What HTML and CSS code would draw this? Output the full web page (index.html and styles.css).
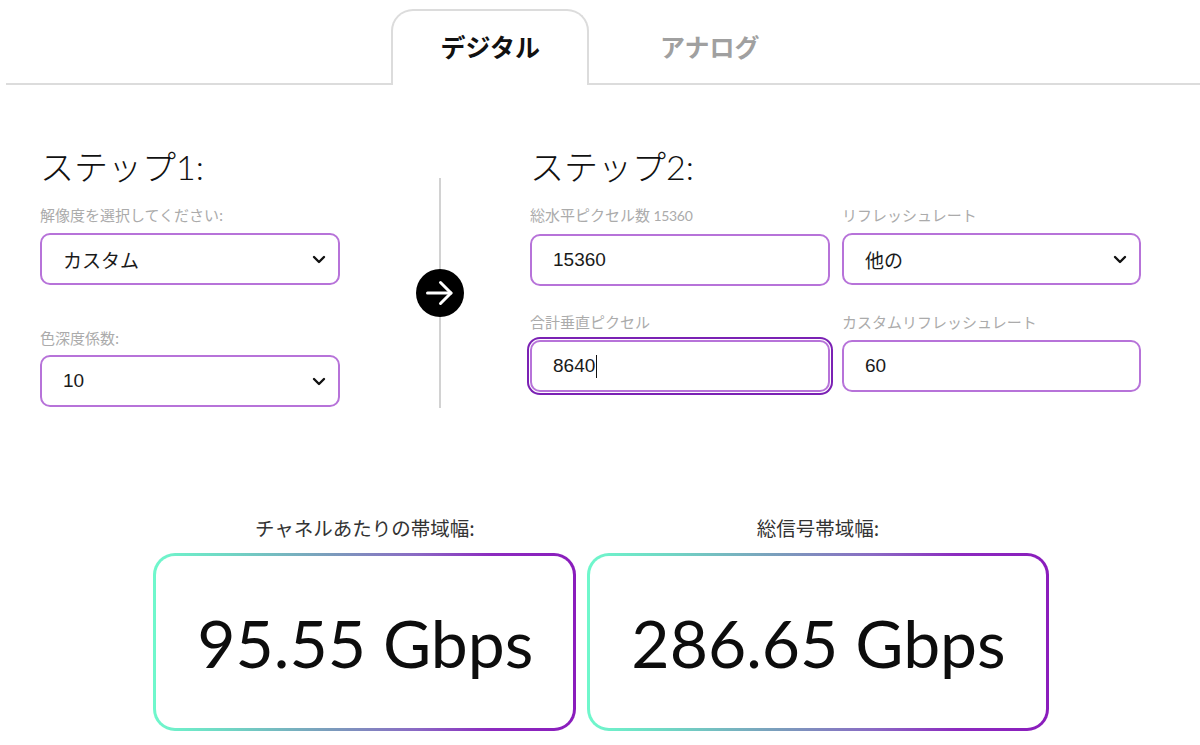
FILE: index.html
```html
<!DOCTYPE html>
<html lang="ja">
<head>
<meta charset="utf-8">
<title>帯域幅計算</title>
<link rel="stylesheet" href="styles.css">
</head>
<body>
<div class="tabbar">
  <div class="tab active">デジタル</div>
  <div class="tab">アナログ</div>
</div>

<div class="steps">
  <section class="step step1">
    <h2 class="step-title">ステップ1:</h2>
    <div class="label">解像度を選択してください:</div>
    <div class="field select"><span>カスタム</span><svg class="chev" width="14" height="9" viewBox="0 0 14 9"><polyline points="2,2 7,7 12,2" fill="none" stroke="#111" stroke-width="2.4" stroke-linecap="round" stroke-linejoin="round"/></svg></div>
    <div class="label label-gap">色深度係数:</div>
    <div class="field select"><span>10</span><svg class="chev" width="14" height="9" viewBox="0 0 14 9"><polyline points="2,2 7,7 12,2" fill="none" stroke="#111" stroke-width="2.4" stroke-linecap="round" stroke-linejoin="round"/></svg></div>
  </section>

  <div class="divider">
    <div class="vline"></div>
    <div class="arrow">
      <svg width="48" height="48" viewBox="0 0 48 48"><circle cx="24" cy="24" r="24" fill="#000"/><line x1="11.5" y1="24" x2="35" y2="24" stroke="#fff" stroke-width="3" stroke-linecap="round"/><polyline points="24.5,13.5 35,24 24.5,34.5" fill="none" stroke="#fff" stroke-width="3" stroke-linecap="round" stroke-linejoin="round"/></svg>
    </div>
    <div class="vline"></div>
  </div>

  <section class="step step2">
    <h2 class="step-title">ステップ2:</h2>
    <div class="grid">
      <div class="cell">
        <div class="label">総水平ピクセル数 <span class="num">15360</span></div>
        <div class="field"><span>15360</span></div>
      </div>
      <div class="cell">
        <div class="label">リフレッシュレート</div>
        <div class="field select"><span>他の</span><svg class="chev" width="14" height="9" viewBox="0 0 14 9"><polyline points="2,2 7,7 12,2" fill="none" stroke="#111" stroke-width="2.4" stroke-linecap="round" stroke-linejoin="round"/></svg></div>
      </div>
      <div class="cell">
        <div class="label">合計垂直ピクセル</div>
        <div class="field focused"><span>8640</span><span class="caret"></span></div>
      </div>
      <div class="cell">
        <div class="label">カスタムリフレッシュレート</div>
        <div class="field"><span>60</span></div>
      </div>
    </div>
  </section>
</div>

<div class="results">
  <div class="result">
    <div class="result-label">チャネルあたりの帯域幅:</div>
    <div class="result-box">95.55 Gbps</div>
  </div>
  <div class="result">
    <div class="result-label">総信号帯域幅:</div>
    <div class="result-box">286.65 Gbps</div>
  </div>
</div>
</body>
</html>
```

FILE: styles.css
```css
* { box-sizing: border-box; }

html, body {
  margin: 0;
  padding: 0;
  background: #fff;
}

body {
  font-family: "Liberation Sans", "Noto Sans CJK JP", sans-serif;
  color: #111;
  width: 1200px;
}

.tabbar {
  display: flex;
  justify-content: center;
  gap: 22px;
  margin-left: 6px;
  padding-right: 6px;
  padding-top: 9px;
  border-bottom: 2px solid #dcdcdc;
}

.tab {
  height: 76px;
  margin-bottom: -2px;
  padding: 0 47px 4px;
  display: flex;
  align-items: center;
  font-family: "Noto Sans CJK JP", sans-serif;
  font-weight: 700;
  font-size: 25px;
  color: #a0a0a0;
  border: 2px solid transparent;
  border-bottom: none;
  border-radius: 22px 22px 0 0;
}

.tab.active {
  color: #111;
  background: #fff;
  border-color: #dcdcdc;
}

.steps {
  display: flex;
  align-items: flex-start;
  margin-top: 62px;
  padding-left: 40px;
}

.step1 { width: 300px; }
.step2 { width: 611px; }

.step-title {
  margin: 0 0 18px;
  font-family: "Lato", "Noto Sans CJK JP", sans-serif;
  font-weight: 300;
  font-size: 34px;
  line-height: 40px;
  color: #111;
}

.label {
  font-family: "Noto Sans CJK JP", sans-serif;
  font-size: 15px;
  line-height: 20px;
  color: #ababab;
  margin-bottom: 8px;
  white-space: nowrap;
}

.label .num {
  font-family: "Lato", sans-serif;
  font-size: 14px;
  letter-spacing: -0.3px;
}

.label-gap { margin-top: 43px; margin-bottom: 7px; }

.field {
  height: 52px;
  border: 2px solid #b773d9;
  border-radius: 10px;
  padding: 0 12px 0 21px;
  display: flex;
  align-items: center;
  font-size: 19px;
  color: #1a1a1a;
  background: #fff;
}

.field span:first-child { flex: 1; }
.field.focused span:first-child { flex: 0 0 auto; }

.chev { flex: 0 0 auto; }

.focused {
  box-shadow: 0 0 0 1px #fff, 0 0 0 3px #7b21b4;
}

.caret {
  display: inline-block;
  width: 1px;
  height: 23px;
  background: #111;
  margin-left: 1px;
}

.divider {
  width: 190px;
  padding-left: 10px;
  margin-top: 31px;
  height: 230px;
  display: flex;
  flex-direction: column;
  align-items: center;
}

.vline {
  flex: 1;
  width: 2px;
  background: #d2d2d2;
}

.arrow {
  width: 48px;
  height: 48px;
}

.arrow svg { display: block; }

.grid {
  display: grid;
  grid-template-columns: 300px 299px;
  column-gap: 12px;
  row-gap: 26px;
}

.results {
  display: flex;
  justify-content: center;
  gap: 11px;
  margin-top: 108px;
  padding-left: 2px;
}

.result {
  display: flex;
  flex-direction: column;
  align-items: center;
}

.result-label {
  font-family: "Noto Sans CJK JP", sans-serif;
  font-size: 19.5px;
  line-height: 24px;
  color: #333;
  margin-bottom: 13px;
}

.result-box {
  height: 178px;
  padding: 0 40px 0 41px;
  display: flex;
  align-items: center;
  border: 3px solid transparent;
  border-radius: 22px;
  background:
    linear-gradient(#fff, #fff) padding-box,
    linear-gradient(90deg, #6ff8cc 0%, #70d6c4 18%, #7b9cbc 42%, #8a6ac4 62%, #8c2bbf 80%, #8a1cbc 100%) border-box;
  font-family: "Lato", sans-serif;
  font-weight: 400;
  font-size: 66px;
  color: #0d0d0d;
  white-space: nowrap;
}
```
